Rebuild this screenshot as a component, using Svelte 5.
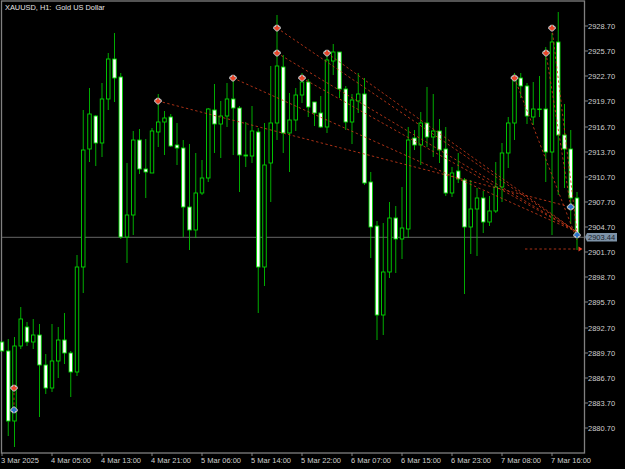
<script>
  // [high, low, bodyTop, bodyBottom, white] in chart pixels, one row per H1 bar
  const bars = [
    [342,351,342,351,1],[339,436,351,421,1],[337,447,346,421,0],[307,349,319,346,0],[322,346,327,342,1],
    [319,349,335,342,0],[324,417,335,365,1],[354,394,365,388,1],[324,392,361,388,0],[327,378,340,361,0],
    [313,364,340,353,1],[351,397,353,372,1],[255,376,267,372,0],[110,293,150,267,0],[88,162,114,149,0],
    [115,166,116,143,1],[83,157,99,143,0],[53,110,59,99,0],[33,102,59,78,1],[73,239,77,237,1],
    [163,263,215,237,0],[131,235,140,215,0],[129,174,140,169,1],[139,198,169,172,1],[128,173,131,173,0],
    [94,147,122,132,0],[111,155,118,122,0],[114,147,117,146,1],[123,165,145,148,1],[140,237,148,207,1],
    [144,250,207,230,1],[153,238,193,230,0],[160,195,178,193,0],[108,182,109,178,0],[84,153,110,124,1],
    [101,158,116,124,0],[83,127,99,116,0],[78,155,99,108,1],[106,192,108,155,1],[122,167,155,156,1],
    [106,163,131,156,0],[128,313,132,267,1],[123,286,165,267,0],[66,202,123,163,0],[15,140,66,123,0],
    [55,153,67,133,1],[93,172,120,133,0],[88,131,95,120,0],[73,103,82,95,0],[79,117,82,107,1],
    [102,126,102,113,1],[96,128,113,127,1],[53,133,60,127,0],[44,75,52,61,0],[52,98,52,89,1],
    [86,130,89,122,1],[94,144,100,122,0],[73,113,94,101,0],[78,185,94,183,1],[172,258,182,227,1],
    [221,340,226,315,1],[223,335,272,315,0],[202,278,218,272,0],[206,273,218,239,1],[187,259,228,239,0],
    [127,238,140,229,0],[130,150,138,145,1],[112,165,123,145,0],[87,147,123,137,1],[94,157,131,137,0],
    [119,163,131,150,1],[127,196,149,193,1],[167,197,173,193,0],[153,183,171,179,1],[178,294,180,227,1],
    [180,254,209,227,0],[188,256,198,209,0],[191,233,198,222,1],[196,226,211,222,0],[162,213,187,211,0],
    [143,202,153,187,0],[117,168,123,153,0],[73,140,80,123,0],[73,98,78,86,1],[83,124,86,116,1],
    [82,125,109,117,0],[76,117,109,109,0],[47,182,109,152,1],[33,235,42,152,0],[12,195,42,135,1],
    [104,188,135,149,1],[130,224,149,198,1],[192,250,198,233,1]
  ];
  const barX = (i) => 2 + 6.25 * i;

  const prices = [];
  for (let k = 0; k < 17; k++) {
    prices.push({ label: (2928.7 - 3 * k).toFixed(2), y: Math.round(26 + 25.125 * k) });
  }

  const times = ['3 Mar 2025', '4 Mar 05:00', '4 Mar 13:00', '4 Mar 21:00', '5 Mar 06:00', '5 Mar 14:00',
    '5 Mar 22:00', '6 Mar 07:00', '6 Mar 15:00', '6 Mar 23:00', '7 Mar 08:00', '7 Mar 16:00'];

  const trades = [
    [158, 101, 570.7, 207], [233, 78, 577, 232], [277, 28, 577, 232], [277, 53, 577, 232],
    [302, 78, 577, 232], [327, 53, 577, 232], [514.5, 78, 577, 240], [546, 53, 570.7, 207],
    [552, 28, 577, 232], [14, 388, 14, 410], [525, 249, 578, 249]
  ];
  const sells = [[158, 101], [233, 78], [277, 28], [277, 53], [302, 78], [327, 53], [514.5, 78], [546, 53], [552, 28], [14, 388]];
  const buys = [[14, 410], [570.7, 207], [577, 235]];
</script>

<svg class="chart" width="625" height="469" viewBox="0 0 625 469">
  <rect class="frame" x="1.5" y="1" width="583" height="452" />
  <line class="bid" x1="2" y1="237.3" x2="584" y2="237.3" />

  {#each bars as [hi, lo, top, bot, white], i}
    <line class="wick" x1={barX(i)} y1={hi} x2={barX(i)} y2={lo} />
    <rect class={white ? 'body white' : 'body'} x={barX(i) - 1.75} y={top} width="3.5" height={Math.max(bot - top, 0.6)} />
  {/each}

  {#each trades as [x1, y1, x2, y2]}
    <line class="trade" {x1} {y1} {x2} {y2} />
  {/each}

  {#each sells as [x, y]}
    <g transform="translate({x} {y})">
      <path class="halo" d="M-3.8 -1 L-1.2 -3.2 H1.2 L3.8 -1 V0.5 L0.8 3.4 H-0.8 L-3.8 0.5 Z" />
      <path class="sell" d="M-2.6 -1 H2.6 V0.4 L0.6 2.4 H-0.6 L-2.6 0.4 Z M-1 -2.4 H1 V-1 H-1 Z" />
    </g>
  {/each}
  {#each buys as [x, y]}
    <g transform="translate({x} {y})">
      <path class="halo" d="M-3.8 -0.5 L-0.8 -3.4 H0.8 L3.8 -0.5 V1 L1.2 3.2 H-1.2 L-3.8 1 Z" />
      <path class="buy" d="M-2.6 1 H2.6 V-0.4 L0.6 -2.4 H-0.6 L-2.6 -0.4 Z M-1 2.4 H1 V1 H-1 Z" />
    </g>
  {/each}
  <path class="sell" d="M578.5 246.5 L582.5 249 L578.5 251.5 Z" />

  <text class="title" x="5" y="10">XAUUSD, H1:  Gold US Dollar</text>

  {#each prices as p}
    <line class="tick" x1="585" y1={p.y} x2="588" y2={p.y} />
    <text class="axis" x="588" y={p.y + 3}>{p.label}</text>
  {/each}

  {#each times as t, i}
    <line class="tick" x1={2 + 50 * i} y1="453" x2={2 + 50 * i} y2="456" />
    <text class="axis" x={1 + 50 * i} y="463">{t}</text>
  {/each}

  <path class="price-tag" d="M585 237 L587 233 H617 V241.5 H587 Z" />
  <text class="price-text" x="588" y="240">2903.44</text>
</svg>

<style>
  :global(body) {
    margin: 0;
    background: #000;
  }
  .chart {
    display: block;
    background: #000;
  }
  .frame {
    fill: none;
    stroke: #808080;
    stroke-width: 1.3;
  }
  .bid {
    stroke: #666;
    stroke-width: 1;
  }
  .wick {
    stroke: #00d800;
    stroke-width: 0.8;
  }
  .body {
    fill: #000;
    stroke: #00d800;
    stroke-width: 0.9;
  }
  .body.white {
    fill: #fff;
  }
  .trade {
    stroke: #c83a1a;
    stroke-width: 0.85;
    stroke-dasharray: 2.4 2.4;
  }
  .halo {
    fill: #bdbdbd;
  }
  .sell {
    fill: #e8452a;
  }
  .buy {
    fill: #2a72c8;
  }
  .tick {
    stroke: #909090;
    stroke-width: 0.9;
  }
  .title,
  .axis,
  .price-text {
    font-family: "Liberation Sans", Arial, sans-serif;
    font-size: 7.5px;
  }
  .title {
    fill: #e4e4e4;
    white-space: pre;
    font-size: 7.4px;
  }
  .axis {
    fill: #d0d0d0;
  }
  .price-tag {
    fill: #7e93a8;
  }
  .price-text {
    fill: #16202a;
  }
</style>
